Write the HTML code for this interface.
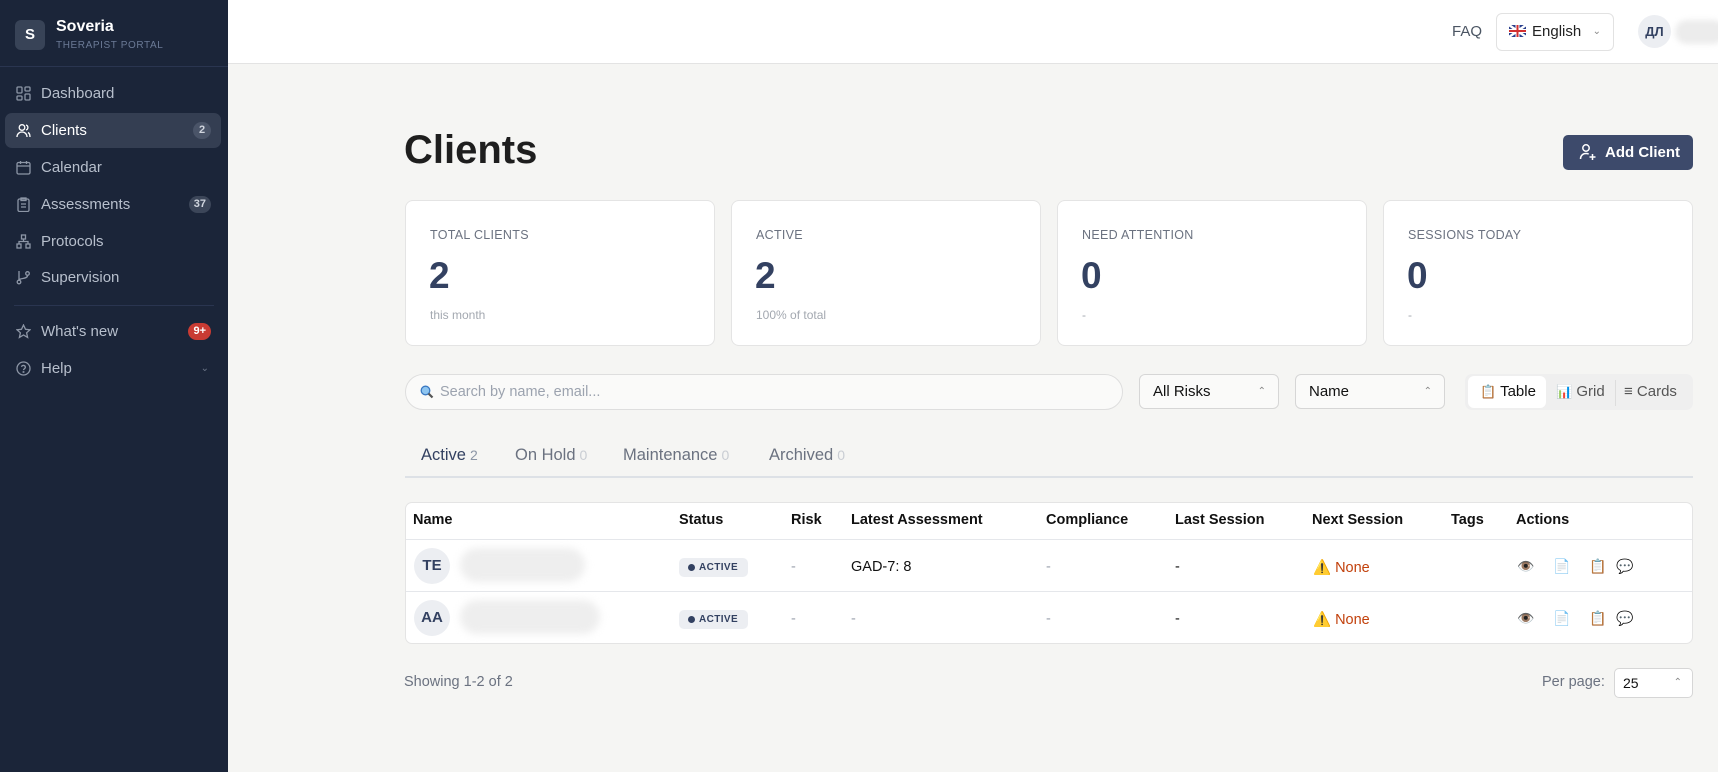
<!DOCTYPE html>
<html><head><meta charset="utf-8"><style>
*{box-sizing:border-box;margin:0;padding:0}
body{width:1718px;height:772px;overflow:hidden;background:#f5f5f3;font-family:"Liberation Sans","DejaVu Sans",sans-serif;color:#1f2937;position:relative}
.sb{position:absolute;left:0;top:0;width:228px;height:772px;background:#1b2539}
.logo{position:absolute;left:15px;top:20px;width:30px;height:30px;border-radius:6px;background:#384357;color:#fff;font-weight:bold;font-size:15px;text-align:center;line-height:30px}
.brand{position:absolute;left:56px;top:18px;color:#fff;font-weight:bold;font-size:16px}
.sub{position:absolute;left:56px;top:40px;color:#6b7a96;font-size:10px;letter-spacing:.6px}
.sbl{position:absolute;left:0;width:228px;height:1px;background:#2a3550}
.nav{position:absolute;left:5px;width:216px;height:35px;color:#b7bfcc;font-size:15px;line-height:35px;padding-left:36px;border-radius:7px}
.nav svg{position:absolute;left:11px;top:10px}
.nav.act{background:#343e52;color:#fff}
.bd{position:absolute;right:10px;top:9px;height:17px;min-width:18px;padding:0 5px;border-radius:9px;background:#3c4659;color:#d0d5de;font-size:11px;font-weight:bold;line-height:17px;text-align:center}
.hd{position:absolute;left:228px;top:0;right:0;height:64px;background:#fff;border-bottom:1px solid #e3e3e3}
.abs{position:absolute}
.card{position:absolute;top:200px;width:310px;height:146px;background:#fff;border:1px solid #e4e4e4;border-radius:8px}
.card .l{position:absolute;left:24px;top:27px;font-size:12.5px;color:#6b7280;letter-spacing:.3px}
.card .v{position:absolute;left:23px;top:54px;font-size:37px;font-weight:bold;color:#334161}
.card .s{position:absolute;left:24px;top:107px;font-size:12px;color:#a3a8b0}
.sel{position:absolute;top:374px;height:35px;background:#fafaf9;border:1px solid #d6d6d6;border-radius:6px;font-size:15px;line-height:33px;padding-left:13px;color:#111}
.sel i{position:absolute;right:12px;top:0;font-style:normal;color:#888;font-size:10px}
.tab{position:absolute;top:446px;font-size:16.5px;color:#6b7280}
.tab b{font-weight:normal;color:#c9cdd3;font-size:14px;margin-left:4px}
.th{position:absolute;top:512px;font-size:14.5px;font-weight:bold;color:#111}
.td{position:absolute;font-size:14.5px;color:#111}
.av{position:absolute;left:414px;width:36px;height:36px;border-radius:50%;background:#eceef2;color:#334161;font-weight:bold;font-size:15px;text-align:center;line-height:36px}
.blur{position:absolute;left:460px;width:125px;height:34px;border-radius:17px;background:#eeeeee;filter:blur(4px)}
.pill{position:absolute;left:679px;width:69px;height:19px;border-radius:5px;background:#eceef2;color:#334161;font-size:10px;font-weight:bold;line-height:19px;padding-left:20px;letter-spacing:.4px}
.pill:before{content:"";position:absolute;left:9px;top:6px;width:7px;height:7px;border-radius:50%;background:#334161}
.dash{color:#9ca3af}
.warn{position:absolute;left:1313px;font-size:14.5px;color:#c2410c}
.ic{position:absolute;font-size:14px}
</style></head><body>
<div class="sb">
<div class="logo">S</div><div class="brand">Soveria</div><div class="sub">THERAPIST PORTAL</div>
<div class="sbl" style="top:66px"></div>
<div class="nav" style="top:76px"><svg width="15" height="15" viewBox="0 0 15 15" fill="none" stroke="#8d96a6" stroke-width="1.3"><rect x="1" y="1" width="5" height="6" rx="1"/><rect x="9" y="1" width="5" height="4" rx="1"/><rect x="1" y="10" width="5" height="4" rx="1"/><rect x="9" y="8" width="5" height="6" rx="1"/></svg>Dashboard</div>
<div class="nav act" style="top:113px"><svg width="15" height="15" viewBox="0 0 15 15" fill="none" stroke="#fff" stroke-width="1.3"><circle cx="6" cy="4.5" r="2.8"/><path d="M1 14c0-3 2.2-5 5-5s5 2 5 5M10 2a2.6 2.6 0 010 5M12 9.5c1.3.7 2 2.3 2 4.5"/></svg>Clients<span class="bd" style="background:#4a5468">2</span></div>
<div class="nav" style="top:150px"><svg width="15" height="15" viewBox="0 0 15 15" fill="none" stroke="#8d96a6" stroke-width="1.3"><rect x="1" y="2.5" width="13" height="11.5" rx="1.5"/><path d="M1 6h13M4.5 1v3M10.5 1v3"/></svg>Calendar</div>
<div class="nav" style="top:187px"><svg width="15" height="15" viewBox="0 0 15 15" fill="none" stroke="#8d96a6" stroke-width="1.3"><rect x="2" y="2" width="11" height="12.5" rx="1.5"/><rect x="5" y="1" width="5" height="2.5"/><path d="M5 7h5M5 10h5"/></svg>Assessments<span class="bd">37</span></div>
<div class="nav" style="top:224px"><svg width="15" height="15" viewBox="0 0 15 15" fill="none" stroke="#8d96a6" stroke-width="1.3"><rect x="5.5" y="1" width="4" height="4"/><rect x="1" y="10" width="4" height="4"/><rect x="10" y="10" width="4" height="4"/><path d="M7.5 5v2.5M3 10V7.5h9V10"/></svg>Protocols</div>
<div class="nav" style="top:260px"><svg width="15" height="15" viewBox="0 0 15 15" fill="none" stroke="#8d96a6" stroke-width="1.3"><circle cx="3" cy="12" r="1.8"/><circle cx="11.5" cy="3.5" r="1.8"/><path d="M3 1v9M11.5 5.5c0 4-8.5 2-8.5 5"/></svg>Supervision</div>
<div class="sbl" style="top:305px;left:14px;width:200px"></div>
<div class="nav" style="top:314px"><svg width="15" height="15" viewBox="0 0 15 15" fill="none" stroke="#8d96a6" stroke-width="1.3"><path d="M7.5 1l2 4.3 4.5.5-3.4 3 1 4.6-4.1-2.4-4.1 2.4 1-4.6L1 5.8l4.5-.5z"/></svg>What's new<span class="bd" style="background:#c93b33;color:#fff">9+</span></div>
<div class="nav" style="top:351px"><svg width="15" height="15" viewBox="0 0 15 15" fill="none" stroke="#8d96a6" stroke-width="1.3"><circle cx="7.5" cy="7.5" r="6.5"/><path d="M5.5 5.8a2 2 0 013.9.5c0 1.3-1.9 1.6-1.9 2.8"/><circle cx="7.5" cy="11" r=".4"/></svg>Help<span style="position:absolute;right:12px;top:0;color:#6b7587;font-size:10px">&#8964;</span></div>
</div>
<div class="hd"></div>
<div class="abs" style="left:1452px;top:23px;font-size:15px;color:#4b5563">FAQ</div>
<div class="abs" style="left:1496px;top:13px;width:118px;height:38px;border:1px solid #e2e2e2;border-radius:6px;background:#fff;font-size:15px;line-height:36px;padding-left:12px;color:#222">
<svg width="17" height="12" viewBox="0 0 17 12" style="vertical-align:-1px;margin-right:6px"><rect width="17" height="12" fill="#283e8c"/><path d="M0 0L17 12M17 0L0 12" stroke="#fff" stroke-width="2.5"/><path d="M8.5 0v12M0 6h17" stroke="#fff" stroke-width="4"/><path d="M8.5 0v12M0 6h17" stroke="#d32f2f" stroke-width="2"/></svg>English<span style="position:absolute;right:12px;color:#888;font-size:10px">&#8964;</span></div>
<div class="abs" style="left:1638px;top:15px;width:33px;height:33px;border-radius:50%;background:#eceef2;color:#334161;font-weight:bold;font-size:13px;text-align:center;line-height:33px">ДЛ</div>
<div class="abs" style="left:1675px;top:20px;width:50px;height:24px;border-radius:12px;background:#ececec;filter:blur(3px)"></div>
<div class="abs" style="left:404px;top:128px;font-size:40px;font-weight:bold;color:#1e1e1e">Clients</div>
<div class="abs" style="left:1563px;top:135px;width:130px;height:35px;border-radius:5px;background:#3d4a6b;color:#fff;font-size:15px;font-weight:bold;line-height:35px;padding-left:42px">
<svg width="18" height="18" viewBox="0 0 18 18" fill="none" stroke="#fff" stroke-width="1.5" style="position:absolute;left:16px;top:8px"><circle cx="7" cy="5" r="3.2"/><path d="M1.5 16c0-3.5 2.5-5.5 5.5-5.5 1 0 2 .2 2.7.6M13.5 11v6M10.5 14h6"/></svg>Add Client</div>
<div class="card" style="left:405px"><div class="l">TOTAL CLIENTS</div><div class="v">2</div><div class="s">this month</div></div>
<div class="card" style="left:731px"><div class="l">ACTIVE</div><div class="v">2</div><div class="s">100% of total</div></div>
<div class="card" style="left:1057px"><div class="l">NEED ATTENTION</div><div class="v">0</div><div class="s">-</div></div>
<div class="card" style="left:1383px"><div class="l">SESSIONS TODAY</div><div class="v">0</div><div class="s">-</div></div>
<div class="abs" style="left:405px;top:374px;width:718px;height:36px;border:1px solid #dedede;border-radius:18px;background:#fafaf9;font-size:14.5px;line-height:34px;padding-left:34px;color:#9ca3af">
<svg width="14" height="14" viewBox="0 0 14 14" style="position:absolute;left:14px;top:10px"><circle cx="5.5" cy="5.5" r="4.3" fill="#8ec5f0" stroke="#3a78c2" stroke-width="1.3"/><path d="M8.5 8.5l4 4" stroke="#555" stroke-width="2.2"/></svg>Search by name, email...</div>
<div class="sel" style="left:1139px;width:140px">All Risks<i>&#8963;<br></i></div>
<div class="sel" style="left:1295px;width:150px">Name<i>&#8963;</i></div>
<div class="abs" style="left:1465px;top:374px;width:228px;height:36px;background:#efefef;border-radius:7px"></div>
<div class="abs" style="left:1468px;top:376px;width:78px;height:32px;background:#fff;border-radius:6px;font-size:15px;line-height:32px;padding-left:12px;color:#111"><span style="font-size:13px">📋</span> Table</div>
<div class="abs" style="left:1556px;top:376px;font-size:15px;line-height:32px;color:#555"><span style="font-size:13px">📊</span> Grid</div>
<div class="abs" style="left:1615px;top:380px;width:1px;height:26px;background:#ddd"></div>
<div class="abs" style="left:1624px;top:376px;font-size:15px;line-height:32px;color:#555">≡ Cards</div>
<div class="tab" style="left:421px;color:#334161">Active<b style="color:#8b95a5">2</b></div>
<div class="tab" style="left:515px">On Hold<b>0</b></div>
<div class="tab" style="left:623px">Maintenance<b>0</b></div>
<div class="tab" style="left:769px">Archived<b>0</b></div>
<div class="abs" style="left:405px;top:476px;width:1288px;height:2px;background:#dde1e6"></div>
<div class="abs" style="left:405px;top:502px;width:1288px;height:142px;background:#fff;border:1px solid #e4e4e4;border-radius:7px"></div>
<div class="abs" style="left:406px;top:539px;width:1286px;height:1px;background:#e5e7eb"></div>
<div class="abs" style="left:406px;top:591px;width:1286px;height:1px;background:#e5e7eb"></div>
<div class="th" style="left:413px">Name</div><div class="th" style="left:679px">Status</div><div class="th" style="left:791px">Risk</div><div class="th" style="left:851px">Latest Assessment</div><div class="th" style="left:1046px">Compliance</div><div class="th" style="left:1175px">Last Session</div><div class="th" style="left:1312px">Next Session</div><div class="th" style="left:1451px">Tags</div><div class="th" style="left:1516px">Actions</div>
<div class="av" style="top:548px">TE</div><div class="blur" style="top:548px"></div>
<div class="pill" style="top:558px">ACTIVE</div>
<div class="td dash" style="left:791px;top:559px">-</div><div class="td" style="left:851px;top:559px">GAD-7: 8</div><div class="td dash" style="left:1046px;top:559px">-</div><div class="td" style="left:1175px;top:559px">-</div>
<div class="warn" style="top:559px">⚠️ None</div>
<div class="ic" style="left:1517px;top:558px">👁️</div><div class="ic" style="left:1553px;top:558px">📄</div><div class="ic" style="left:1589px;top:558px">📋</div><div class="ic" style="left:1616px;top:558px">💬</div>
<div class="av" style="top:600px">AA</div><div class="blur" style="top:600px;width:140px"></div>
<div class="pill" style="top:610px">ACTIVE</div>
<div class="td dash" style="left:791px;top:611px">-</div><div class="td dash" style="left:851px;top:611px">-</div><div class="td dash" style="left:1046px;top:611px">-</div><div class="td" style="left:1175px;top:611px">-</div>
<div class="warn" style="top:611px">⚠️ None</div>
<div class="ic" style="left:1517px;top:610px">👁️</div><div class="ic" style="left:1553px;top:610px">📄</div><div class="ic" style="left:1589px;top:610px">📋</div><div class="ic" style="left:1616px;top:610px">💬</div>
<div class="abs" style="left:404px;top:674px;font-size:14.5px;color:#6b7280">Showing 1-2 of 2</div>
<div class="abs" style="left:1542px;top:674px;font-size:14.5px;color:#6b7280">Per page:</div>
<div class="abs" style="left:1614px;top:668px;width:79px;height:30px;border:1px solid #d6d6d6;border-radius:5px;background:#fff;font-size:14px;line-height:28px;padding-left:8px;color:#111">25<span style="position:absolute;right:10px;color:#888;font-size:10px">&#8963;</span></div>
</body></html>
